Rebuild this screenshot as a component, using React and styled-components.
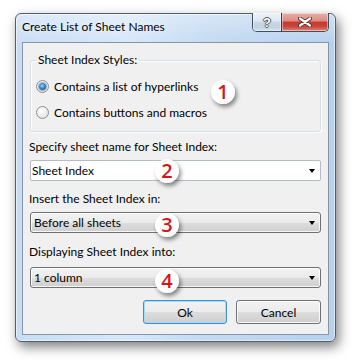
import React from 'react';
import styled, { createGlobalStyle } from 'styled-components';

const Global = createGlobalStyle`
  html, body { margin: 0; padding: 0; background: #ffffff; }
  body {
    font-family: Lato, "Open Sans", "Noto Sans", sans-serif;
    font-size: 12px;
    color: #000;
  }
  * { box-sizing: border-box; }
`;

const Page = styled.div`
  width: 357px;
  height: 364px;
  padding: 13px 0 0 15px;
`;

const Window = styled.div`
  width: 321px;
  height: 329px;
  border: 1px solid #4e5d70;
  border-radius: 6px;
  background:
    linear-gradient(180deg, rgba(255,255,255,0.35) 0px, rgba(255,255,255,0) 30px),
    linear-gradient(90deg, #c8ddf4 0%, #d6e7f9 35%, #c3daf2 60%, #b6d1ee 100%);
  box-shadow: 3px 5px 12px rgba(0, 0, 0, 0.5), inset 0 0 0 1px rgba(255,255,255,0.55);
  display: flex;
  flex-direction: column;
  padding: 0 6px 6px;
`;

const TitleBar = styled.div`
  height: 28px;
  display: flex;
  justify-content: space-between;
  align-items: flex-start;
`;

const Title = styled.div`
  margin-top: 5px;
  line-height: 16px;
  font-size: 12px;
  color: #000;
  text-shadow: 0 0 6px rgba(255,255,255,0.9);
`;

const CaptionButtons = styled.div`
  margin-top: -1px;
  display: flex;
  height: 19px;
  border: 1px solid #3f4e60;
  border-top: none;
  border-radius: 0 0 5px 5px;
  overflow: hidden;
`;

const CaptionButton = styled.div`
  width: ${p => p.$w}px;
  height: 100%;
  display: flex;
  align-items: center;
  justify-content: center;
  box-shadow: inset 0 0 0 1px rgba(255,255,255,0.45);
  background: ${p => p.$red
    ? 'linear-gradient(180deg, #e9b0a8 0%, #dc8a80 45%, #c5392e 50%, #c9463a 75%, #dc8a78 100%)'
    : 'linear-gradient(180deg, #eef3f9 0%, #dde7f2 45%, #c9d7e7 50%, #c3d2e3 75%, #d2dfee 100%)'};
  border-left: ${p => p.$red ? '1px solid #4a3535' : 'none'};
`;

const HelpGlyph = styled.span`
  font-family: "Liberation Sans", sans-serif;
  font-weight: bold;
  font-size: 13px;
  line-height: 13px;
  color: #fff;
  margin-top: 1px;
  text-shadow: 1px 0 0 #555, -1px 0 0 #555, 0 1px 0 #555, 0 -1px 0 #555;
`;

const Client = styled.div`
  flex: 1;
  background: #f0f0f0;
  border: 1px solid #8795a8;
  padding: 0 7px;
  display: flex;
  flex-direction: column;
`;

const Group = styled.fieldset`
  margin: 9px 0 0;
  padding: 8px 0 9px 5px;
  border: 1px solid #d5dfe5;
  border-radius: 3px;
  box-shadow: inset 1px 1px 0 #ffffff, 1px 1px 0 #ffffff;
  display: flex;
  flex-direction: column;
  gap: 6px;
`;

const Legend = styled.legend`
  padding: 0 2px;
  line-height: 16px;
`;

const RadioRow = styled.label`
  position: relative;
  height: 20px;
  display: flex;
  align-items: center;
  gap: 5px;
`;

const Radio = styled.span`
  width: 13px;
  height: 13px;
  border-radius: 50%;
  border: 1px solid #8f8f8f;
  display: flex;
  align-items: center;
  justify-content: center;
  background: radial-gradient(circle at 40% 35%, #ffffff 0%, #f0f0f0 45%, #d4d4d4 100%);
  &::after {
    content: '';
    display: ${p => p.$checked ? 'block' : 'none'};
    width: 7px;
    height: 7px;
    border-radius: 50%;
    background: radial-gradient(circle at 45% 40%, #a8d8ff 0%, #3c8ed3 40%, #0e3f70 100%);
    box-shadow: 0 0 0 1px rgba(30, 80, 130, 0.4);
  }
`;

const FieldLabel = styled.div`
  line-height: 16px;
  margin-top: ${p => p.$mt}px;
  margin-left: -1px;
`;

const Combo = styled.div`
  position: relative;
  margin-top: ${p => p.$mt}px;
  height: 21px;
  border-radius: ${p => p.$editable ? '2px' : '3px'};
  border: 1px solid ${p => p.$editable ? '#b5bcc7' : '#707070'};
  background: ${p => p.$editable
    ? '#ffffff'
    : 'linear-gradient(180deg, #f2f2f2 0%, #ebebeb 50%, #dddddd 50%, #cfcfcf 100%)'};
  box-shadow: ${p => p.$editable ? 'none' : 'inset 0 0 0 1px rgba(255,255,255,0.8)'};
  display: flex;
  align-items: center;
  justify-content: space-between;
  padding: 0 5px 0 ${p => p.$editable ? 1 : 3}px;
`;

const ComboText = styled.span`
  line-height: 16px;
`;

const Arrow = styled.span`
  width: 0;
  height: 0;
  border-left: 3.5px solid transparent;
  border-right: 3.5px solid transparent;
  border-top: 4px solid #000;
  margin-top: 1px;
`;

const Badge = styled.span`
  position: absolute;
  left: ${p => p.$x}px;
  top: ${p => p.$y}px;
  width: 24px;
  height: 24px;
  border-radius: 50%;
  background: radial-gradient(circle at 40% 35%, #ffffff 0%, #ffffff 60%, #ececec 100%);
  box-shadow: 2px 3px 4px rgba(0, 0, 0, 0.45);
  display: flex;
  align-items: center;
  justify-content: center;
  font-family: "Open Sans", "Noto Sans", sans-serif;
  font-weight: 600;
  font-size: 20px;
  line-height: 20px;
  color: #d7141a;
`;

const ButtonRow = styled.div`
  margin-top: 12px;
  display: flex;
  justify-content: flex-end;
  gap: 9px;
`;

const Button = styled.button`
  width: ${p => p.$w}px;
  height: 24px;
  font-family: inherit;
  font-size: 12px;
  color: #000;
  border-radius: 3px;
  border: 1px solid ${p => p.$default ? '#3c8fd0' : '#707070'};
  background: linear-gradient(180deg, #f2f2f2 0%, #ebebeb 50%, #dddddd 50%, #cfcfcf 100%);
  box-shadow: inset 0 0 0 1px ${p => p.$default ? '#a6dcf7' : 'rgba(255,255,255,0.85)'};
  padding: 0;
`;

function CloseIcon() {
  return (
    <svg width="14" height="10" viewBox="0 0 14 10">
      <path d="M2 1.5 L12 8.5 M12 1.5 L2 8.5" stroke="#5a3030" strokeWidth="4" strokeLinecap="round" />
      <path d="M2 1.5 L12 8.5 M12 1.5 L2 8.5" stroke="#ffffff" strokeWidth="2.2" strokeLinecap="round" />
    </svg>
  );
}

export default function App() {
  return (
    <Page>
      <Global />
      <Window>
        <TitleBar>
          <Title>Create List of Sheet Names</Title>
          <CaptionButtons>
            <CaptionButton $w={28}><HelpGlyph>?</HelpGlyph></CaptionButton>
            <CaptionButton $w={47} $red><CloseIcon /></CaptionButton>
          </CaptionButtons>
        </TitleBar>
        <Client>
          <Group>
            <Legend>Sheet Index Styles:</Legend>
            <RadioRow>
              <Radio $checked />
              <span>Contains a list of hyperlinks</span>
              <Badge $x={175} $y={4}>1</Badge>
            </RadioRow>
            <RadioRow>
              <Radio />
              <span>Contains buttons and macros</span>
            </RadioRow>
          </Group>

          <FieldLabel $mt={7}>Specify sheet name for Sheet Index:</FieldLabel>
          <Combo $mt={5} $editable>
            <ComboText>Sheet Index</ComboText>
            <Arrow />
            <Badge $x={124} $y={-2}>2</Badge>
          </Combo>

          <FieldLabel $mt={10}>Insert the Sheet Index in:</FieldLabel>
          <Combo $mt={5}>
            <ComboText>Before all sheets</ComboText>
            <Arrow />
            <Badge $x={124} $y={0}>3</Badge>
          </Combo>

          <FieldLabel $mt={11}>Displaying Sheet Index into:</FieldLabel>
          <Combo $mt={7}>
            <ComboText>1 column</ComboText>
            <Arrow />
            <Badge $x={124} $y={1}>4</Badge>
          </Combo>

          <ButtonRow>
            <Button $w={84} $default>Ok</Button>
            <Button $w={85}>Cancel</Button>
          </ButtonRow>
        </Client>
      </Window>
    </Page>
  );
}
